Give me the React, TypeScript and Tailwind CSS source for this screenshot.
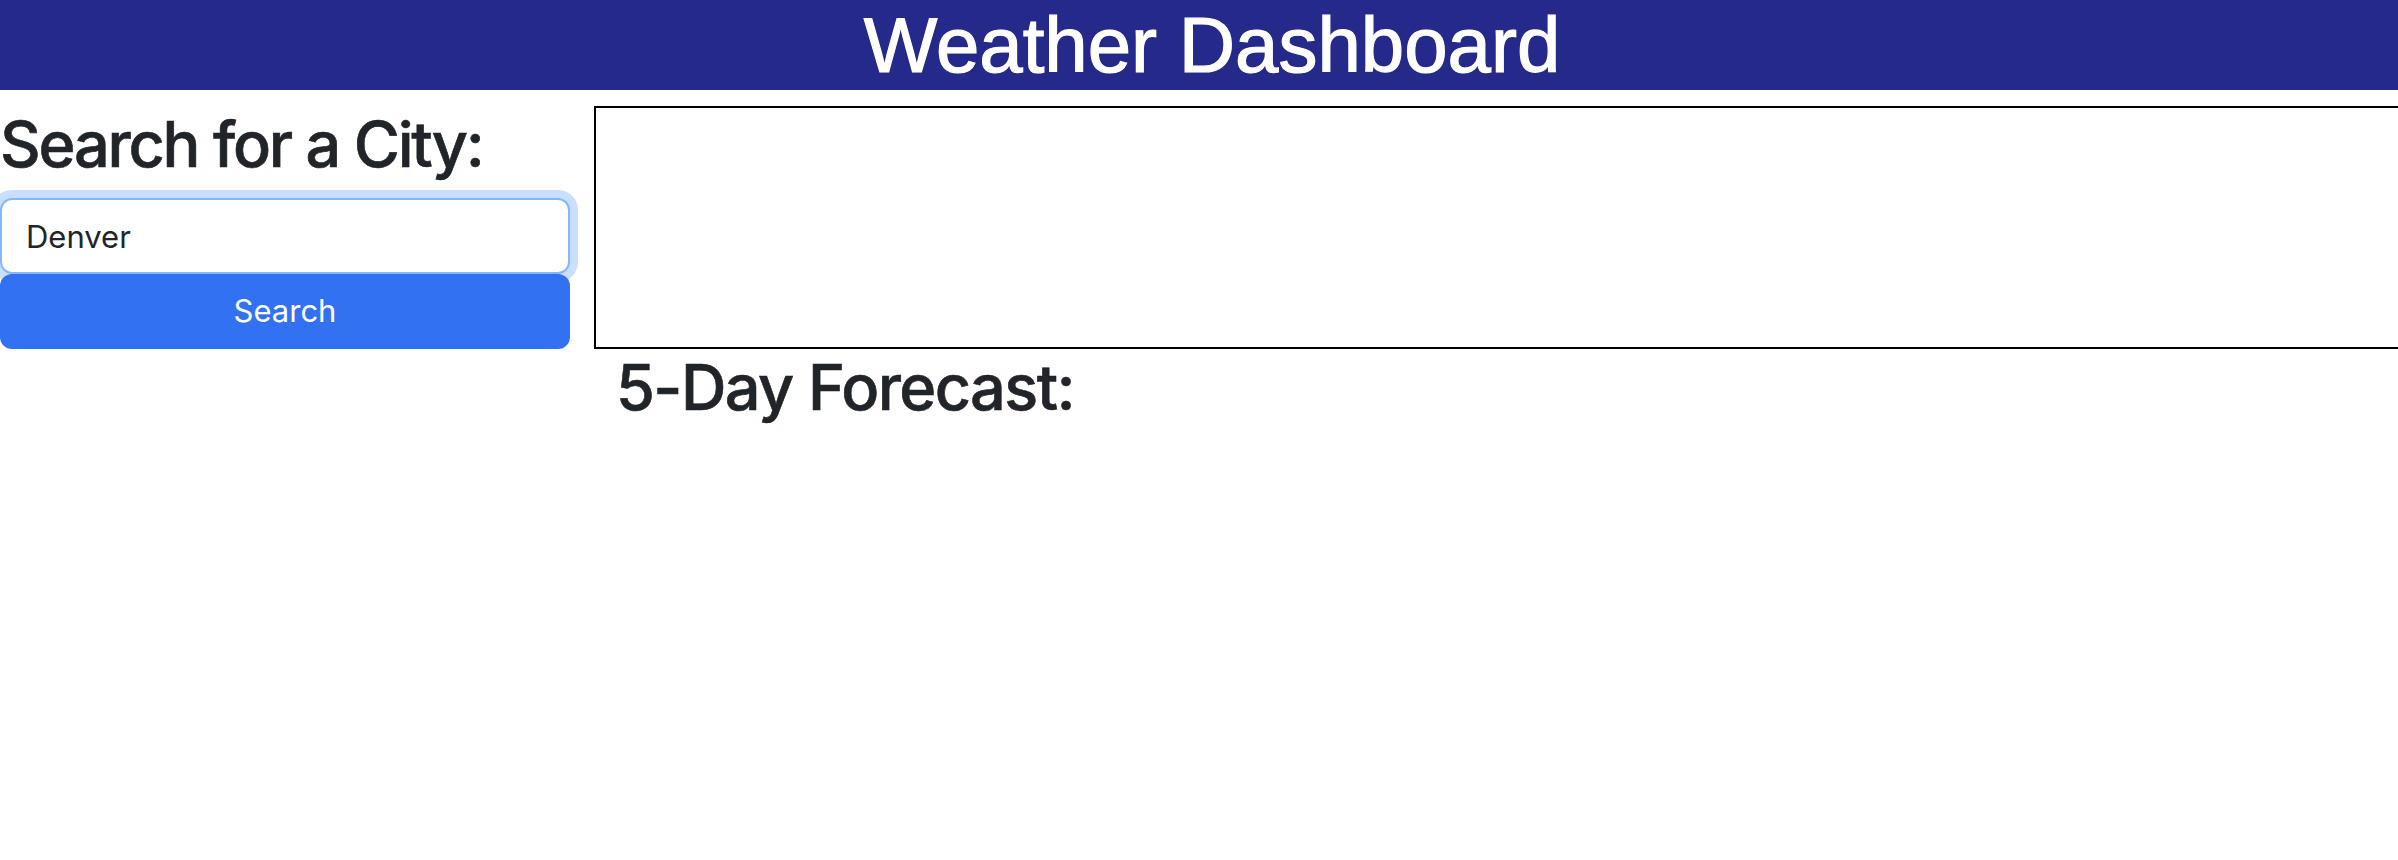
export default function App() {
  return (
    <div className="min-h-screen w-full overflow-hidden bg-white text-[#212529]">
      <header className="h-[90px] bg-[#25298a] pl-[26px] text-center">
        <h1 className="font-['Liberation_Sans',Arial,sans-serif] text-[78px] leading-[90px] font-normal text-white [-webkit-text-stroke:1.2px_white]">
          Weather Dashboard
        </h1>
      </header>

      <main className="mt-[16px] flex gap-[24px] font-['Inter','Noto_Sans',sans-serif]">
        <section className="w-[570px] shrink-0">
          <h2 className="text-[63px] leading-[77px] font-medium tracking-[-0.035em] [-webkit-text-stroke:0.6px_#212529]">
            Search for a City:
          </h2>
          <div className="mt-[15px]">
            <input
              type="text"
              defaultValue="Denver"
              className="block h-[76px] w-full rounded-[12px] border-2 border-[#86b7fe] bg-white px-[24px] text-[31px] text-[#212529] shadow-[0_0_0_8px_rgba(13,110,253,0.22)] outline-none"
            />
            <button className="block h-[75px] w-full rounded-[12px] bg-[#3171f2] text-[31px] text-white">
              Search
            </button>
          </div>
        </section>

        <section className="w-[1830px] shrink-0">
          <div className="h-[243px] border-2 border-black" />
          <h2 className="pl-[22px] text-[63px] leading-[77px] font-medium tracking-[-0.025em] [-webkit-text-stroke:0.6px_#212529]">
            5-Day Forecast:
          </h2>
        </section>
      </main>
    </div>
  );
}
